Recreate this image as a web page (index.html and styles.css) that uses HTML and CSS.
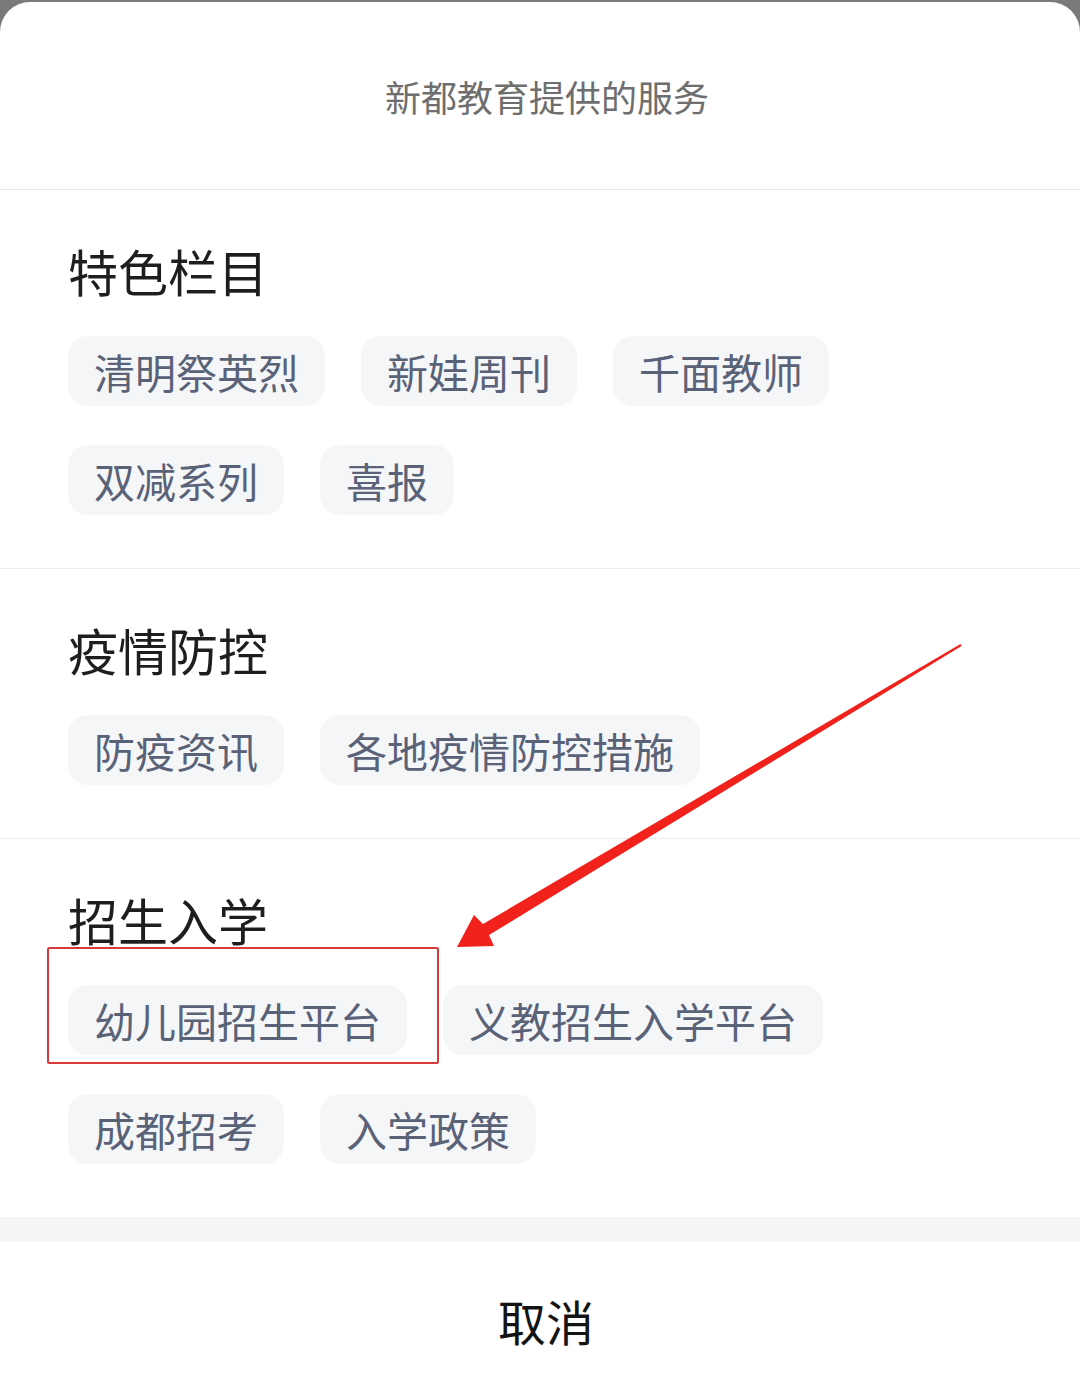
FILE: index.html
```html
<!DOCTYPE html>
<html lang="zh-CN">
<head>
<meta charset="utf-8">
<title>新都教育提供的服务</title>
<link rel="stylesheet" href="styles.css">
</head>
<body>
<div class="sheet">
  <div class="header"><span class="title">新都教育提供的服务</span></div>

  <section class="section">
    <h2 class="section-title">特色栏目</h2>
    <div class="chips">
      <span class="chip">清明祭英烈</span>
      <span class="chip">新娃周刊</span>
      <span class="chip">千面教师</span>
      <span class="chip">双减系列</span>
      <span class="chip">喜报</span>
    </div>
  </section>

  <section class="section">
    <h2 class="section-title">疫情防控</h2>
    <div class="chips">
      <span class="chip">防疫资讯</span>
      <span class="chip">各地疫情防控措施</span>
    </div>
  </section>

  <section class="section section-last">
    <h2 class="section-title">招生入学</h2>
    <div class="chips">
      <span class="chip">幼儿园招生平台</span>
      <span class="chip">义教招生入学平台</span>
      <span class="chip">成都招考</span>
      <span class="chip">入学政策</span>
    </div>
  </section>

  <div class="band"></div>
  <div class="cancel">取消</div>

  <div class="highlight-box"></div>
  <svg class="arrow" width="1080" height="1380" viewBox="0 0 1080 1380" xmlns="http://www.w3.org/2000/svg">
    <polygon fill="#f0221b" points="457,947 494,946 489,935 961.5,646 960.5,644 483,924 474,915"/>
  </svg>
</div>
</body>
</html>
```

FILE: styles.css
```css
html, body {
  margin: 0;
  padding: 0;
}

body {
  background: #7a7a7a;
  font-family: "Noto Sans CJK SC", "Noto Sans", sans-serif;
  width: 1080px;
  height: 1380px;
  overflow: hidden;
}

.sheet {
  position: relative;
  margin-top: 2px;
  background: #ffffff;
  border-radius: 30px 30px 0 0;
  height: 1378px;
}

.header {
  display: flex;
  align-items: center;
  justify-content: center;
  border-bottom: 1px solid #e8e8e8;
  padding: 1px 0 0 14px;
  box-sizing: border-box;
  height: 188px;
}

.title {
  font-size: 36px;
  color: #6e6e6e;
  line-height: 40px;
}

.section {
  padding: 54px 68px 53px;
  border-bottom: 1px solid #ececec;
}

.section-last {
  border-bottom: none;
}

.section-title {
  margin: 0 0 40px;
  font-size: 50px;
  font-weight: 400;
  line-height: 52px;
  color: #1e1e1e;
}

.chips {
  display: flex;
  flex-wrap: wrap;
  gap: 39px 36px;
}

.chip {
  height: 70px;
  line-height: 70px;
  padding: 0 26px;
  border-radius: 20px;
  background: #f5f6f8;
  color: #5a6278;
  font-size: 41px;
  white-space: nowrap;
}

.band {
  height: 25px;
  background: #f5f5f5;
}

.cancel {
  height: 158px;
  display: flex;
  align-items: center;
  justify-content: center;
  padding-left: 12px;
  padding-bottom: 3px;
  box-sizing: border-box;
  font-size: 48px;
  color: #141414;
}

.highlight-box {
  position: absolute;
  left: 47px;
  top: 945px;
  width: 388px;
  height: 113px;
  border: 2px solid #d63a3a;
  border-radius: 2px;
}

.arrow {
  position: absolute;
  left: 0;
  top: -2px;
  pointer-events: none;
}
```
